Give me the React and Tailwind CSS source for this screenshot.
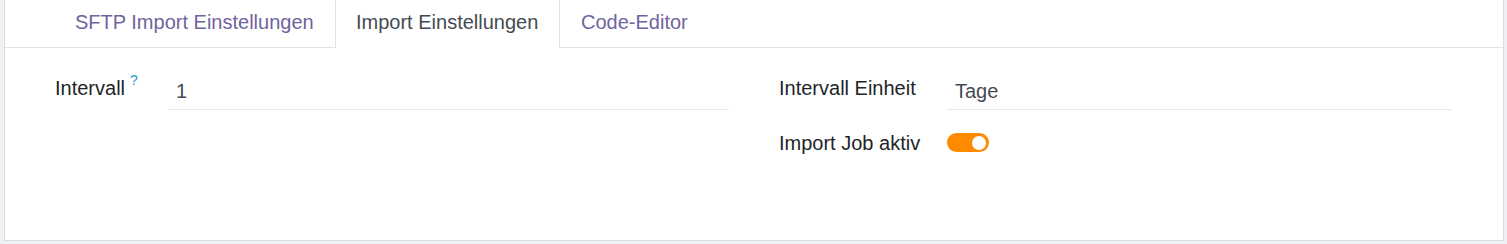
import React from "react";

const tabs = [
  { name: "SFTP Import Einstellungen", width: "w-[281px]" },
  { name: "Import Einstellungen", width: "w-[225px]", active: true },
  { name: "Code-Editor", width: "w-[150px]" },
];

const Toggle = ({ on }) => (
  <div
    className={`mt-[2px] flex h-[19px] w-[42px] items-center rounded-full px-[3px] ${
      on ? "justify-end bg-[#ff8a00]" : "justify-start bg-gray-300"
    }`}
  >
    <div className="h-[14px] w-[14px] rounded-full bg-white" />
  </div>
);

const Field = ({ label, help, value, labelWidth, fieldWidth }) => (
  <div className="flex items-start">
    <div className={`${labelWidth} shrink-0 text-[20px] leading-[24px] text-[#212529]`}>
      {label}
      {help && (
        <span className="relative -top-[3px] ml-[5px] align-top text-[14px] leading-[14px] text-[#1b9ec9]">
          ?
        </span>
      )}
    </div>
    <div
      className={`${fieldWidth} border-b border-[#e4e6ea] pl-[8px] pt-[3px] pb-[6px] text-[20px] leading-[24px] text-[#444b52]`}
    >
      {value}
    </div>
  </div>
);

export default function App() {
  return (
    <div
      className="h-[244px] w-[1507px] overflow-hidden bg-[#eef0f3] pl-[4px]"
      style={{ fontFamily: '"Liberation Sans", Arial, sans-serif' }}
    >
      <div className="h-[241px] w-[1500px] border-x border-b border-[#d9dce1] bg-white">
        {/* tabs */}
        <div className="flex h-[48px] border-b border-[#dee2e6] pl-[49px]">
          {tabs.map((tab) => (
            <div
              key={tab.name}
              className={`${tab.width} h-[48px] shrink-0 border-x pl-[20px] pt-[10px] text-[20px] leading-[24px] ${
                tab.active
                  ? "-mb-px border-[#dee2e6] bg-white pl-[19px] text-[#444b52]"
                  : "border-transparent text-[#71639e]"
              }`}
            >
              {tab.name}
            </div>
          ))}
        </div>

        {/* form */}
        <div className="grid grid-cols-2 gap-x-[50px] px-[50px] pt-[28px]">
          <div className="flex flex-col gap-[21px]">
            <Field
              label="Intervall"
              help
              value="1"
              labelWidth="w-[113px]"
              fieldWidth="w-[561px]"
            />
          </div>
          <div className="flex flex-col gap-[21px]">
            <Field
              label="Intervall Einheit"
              value="Tage"
              labelWidth="w-[168px]"
              fieldWidth="w-[505px]"
            />
            <div className="flex items-start">
              <div className="w-[168px] shrink-0 text-[20px] leading-[24px] text-[#212529]">
                Import Job aktiv
              </div>
              <Toggle on />
            </div>
          </div>
        </div>
      </div>
    </div>
  );
}
